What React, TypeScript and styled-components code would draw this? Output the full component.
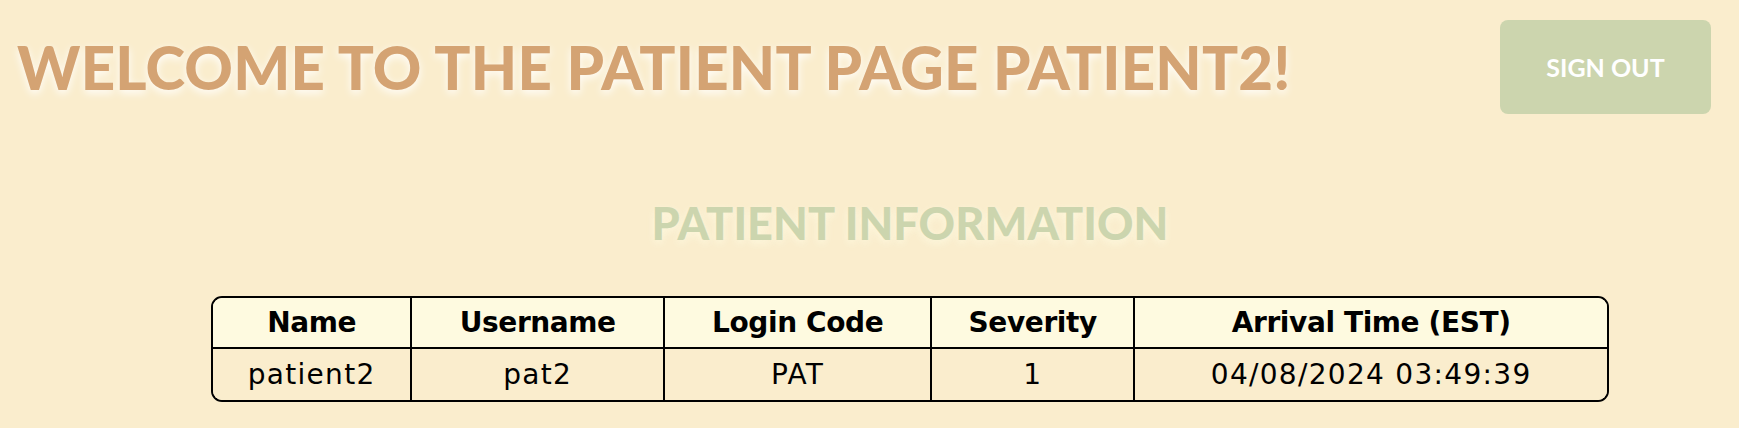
import React from "react";
import styled, { createGlobalStyle } from "styled-components";

const Global = createGlobalStyle`
  html, body { margin: 0; padding: 0; background: #faedcd; }
  body { font-family: "Lato", "Open Sans", sans-serif; }
`;

const Page = styled.div`
  width: 1739px;
  height: 428px;
  background: #faedcd;
  box-sizing: border-box;
  overflow: hidden;
`;

const Header = styled.header`
  display: flex;
  align-items: center;
  justify-content: space-between;
  padding: 20px 28px 0 17px;
`;

const Title = styled.h1`
  margin: 0;
  font-family: "Lato", sans-serif;
  font-weight: 900;
  font-size: 60px;
  letter-spacing: 0.2px;
  color: #d4a373;
  text-shadow: 0 3px 8px rgba(255, 255, 255, 0.95);
  white-space: nowrap;
`;

const SignOut = styled.button`
  width: 211px;
  height: 94px;
  border: none;
  border-radius: 8px;
  background: #ccd5ae;
  color: #ffffff;
  font-family: "Lato", sans-serif;
  font-weight: 700;
  font-size: 25px;
  cursor: pointer;
`;

const Main = styled.main`
  display: flex;
  flex-direction: column;
  align-items: center;
  padding-left: 81px;
`;

const SubTitle = styled.h2`
  margin: 82px 0 0;
  font-family: "Lato", sans-serif;
  font-weight: 900;
  font-size: 45px;
  letter-spacing: 0.1px;
  color: #ccd5ae;
  text-shadow: 0 3px 8px rgba(254, 250, 224, 0.95);
  line-height: 1.2;
`;

const Table = styled.table`
  margin-top: 46px;
  width: 1398px;
  border-collapse: separate;
  border-spacing: 0;
  border: 2px solid #000;
  border-radius: 11px;
  overflow: hidden;
  font-family: "DejaVu Sans", "Open Sans", sans-serif;
  font-size: 28px;
  color: #000;
`;

const Th = styled.th<{ $w: number }>`
  width: ${(p) => p.$w}px;
  height: 49px;
  padding: 0;
  background: #fefae0;
  font-weight: 700;
  letter-spacing: -0.4px;
  border-bottom: 2px solid #000;
  border-left: 2px solid #000;
  &:first-child { border-left: none; }
`;

const Td = styled.td`
  height: 51px;
  padding: 0;
  text-align: center;
  font-weight: 400;
  letter-spacing: 1.3px;
  background: #faedcd;
  border-left: 2px solid #000;
  &:first-child { border-left: none; }
`;

const cols = [
  { label: "Name", w: 198 },
  { label: "Username", w: 252 },
  { label: "Login Code", w: 267 },
  { label: "Severity", w: 202 },
  { label: "Arrival Time (EST)", w: 475 },
];

const row = ["patient2", "pat2", "PAT", "1", "04/08/2024 03:49:39"];

export default function App() {
  return (
    <Page>
      <Global />
      <Header>
        <Title>WELCOME TO THE PATIENT PAGE PATIENT2!</Title>
        <SignOut>SIGN OUT</SignOut>
      </Header>
      <Main>
        <SubTitle>PATIENT INFORMATION</SubTitle>
        <Table>
          <thead>
            <tr>
              {cols.map((c) => (
                <Th key={c.label} $w={c.w}>
                  {c.label}
                </Th>
              ))}
            </tr>
          </thead>
          <tbody>
            <tr>
              {row.map((v, i) => (
                <Td key={i}>{v}</Td>
              ))}
            </tr>
          </tbody>
        </Table>
      </Main>
    </Page>
  );
}
